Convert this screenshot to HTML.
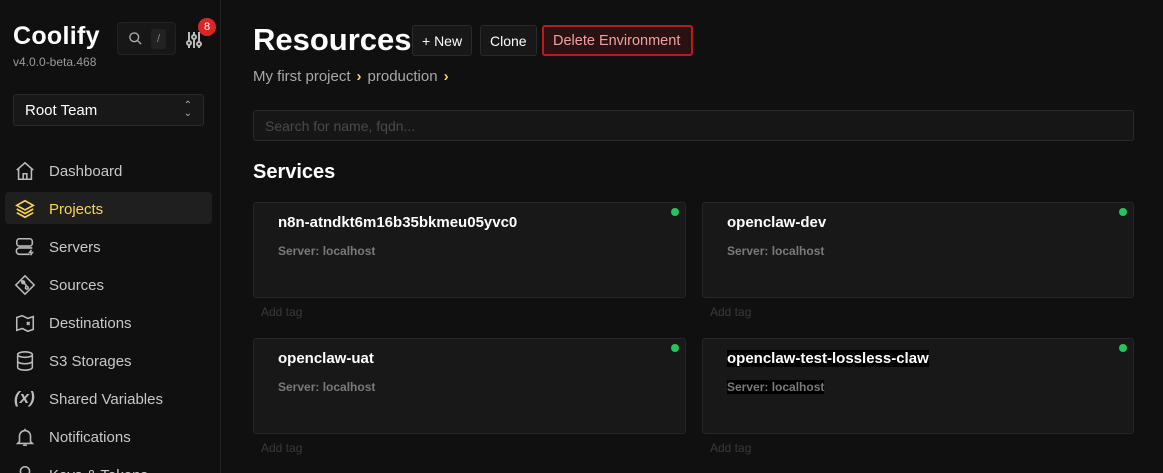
<!DOCTYPE html>
<html><head><meta charset="utf-8"><style>
*{box-sizing:border-box;margin:0;padding:0}
html,body{width:1163px;height:473px;overflow:hidden}
body{background:#101010;font-family:"Liberation Sans",sans-serif;color:#fff;position:relative}
.side{position:absolute;left:0;top:0;width:221px;height:473px;border-right:1px solid #242424;background:#101010}
.logo{position:absolute;left:13px;top:22px;font-size:25px;font-weight:bold;letter-spacing:.3px}
.ver{position:absolute;left:13px;top:55px;font-size:12px;color:#9a9a9a}
.srch{position:absolute;left:117px;top:22px;width:59px;height:33px;background:#171717;border:1px solid #222;border-radius:4px}
.srch .k{position:absolute;left:33px;top:6px;width:15px;height:20px;background:#222;border-radius:3px;color:#888;font-size:11px;text-align:center;line-height:20px}
.badge{position:absolute;left:198px;top:18px;width:18px;height:18px;border-radius:9px;background:#dc2626;font-size:11px;text-align:center;line-height:18px}
.team{position:absolute;left:13px;top:94px;width:191px;height:32px;background:#181818;border:1px solid #2a2a2a;border-radius:3px;font-size:15px;padding:7px 11px}
.nav{position:absolute;left:5px;width:207px;height:32px;font-size:15px;color:#c8c8c8;padding:9px 0 0 44px;border-radius:4px}
.nav svg{position:absolute;left:9px;top:6px}
.act{background:#1f1f1f;color:#fcd452}
h1{position:absolute;left:253px;top:22px;font-size:31px;font-weight:bold}
.btn{position:absolute;top:25px;height:31px;background:#181818;border:1px solid #2a2a2a;border-radius:3px;font-size:14px;padding:7px 9px}
.crumb{position:absolute;left:253px;top:68px;font-size:15px;color:#a8a8a8}
.crumb b{color:#fcd452;margin:0 6px}
.search{position:absolute;left:253px;top:110px;width:881px;height:31px;background:#161616;border:1px solid #2a2a2a;border-radius:3px;font-size:14px;color:#4a4a4a;padding:7px 11px}
h2{position:absolute;left:253px;top:161px;font-size:20px;font-weight:bold}
.card{position:absolute;width:433px;height:96px;background:#181818;border:1px solid #262626;border-radius:3px}
.card .t{position:absolute;left:24px;top:11px;font-size:15px;font-weight:bold}
.card .s{position:absolute;left:24px;top:41px;font-size:12px;font-weight:bold;color:#7a7a7a}
.card .d{position:absolute;right:6px;top:5px;width:8px;height:8px;border-radius:4px;background:#22c55e}
.tag{position:absolute;font-size:12px;color:#3a3a3a}
</style></head><body>
<div class="side">
<div class="logo">Coolify</div><div class="ver">v4.0.0-beta.468</div>
<div class="srch"><svg style="position:absolute;left:10px;top:8px" width="15" height="15" viewBox="0 0 24 24" fill="none" stroke="#aaa" stroke-width="2.2"><circle cx="10" cy="10" r="7"/><path d="M15 15l6 6"/></svg><div class="k">/</div></div>
<svg style="position:absolute;left:186px;top:31px" width="16" height="18" viewBox="0 0 16 18" fill="none" stroke="#bbb" stroke-width="2"><path d="M3 1v16M8 1v16M13 1v16"/><circle cx="3" cy="12" r="2" fill="#101010"/><circle cx="8" cy="6" r="2" fill="#101010"/><circle cx="13" cy="13" r="2" fill="#101010"/></svg>
<div class="badge">8</div>
<div class="team">Root Team<span style="position:absolute;right:11px;top:7px;font-size:10px;color:#aaa;line-height:8px">⌃<br>⌄</span></div>
<div class="nav" style="top:154px"><svg width="22" height="22" viewBox="0 0 24 24" fill="none" stroke="#bbb" stroke-width="1.7"><path d="M3 11l9-8 9 8M5 9v12h14V9M10 21v-6h4v6"/></svg>Dashboard</div>
<div class="nav act" style="top:192px"><svg width="22" height="22" viewBox="0 0 24 24" fill="none" stroke="#fcd452" stroke-width="1.8"><path d="M12 3l9 5-9 5-9-5zM3 12l9 5 9-5M3 16l9 5 9-5"/></svg>Projects</div>
<div class="nav" style="top:230px"><svg width="22" height="22" viewBox="0 0 24 24" fill="none" stroke="#bbb" stroke-width="1.7"><rect x="3" y="3" width="17" height="8" rx="3"/><path d="M17 20H6a3 3 0 010-7h14M7 7h.01M7 16.5h.01M19 15l-2 3h3l-2 3"/></svg>Servers</div>
<div class="nav" style="top:268px"><svg width="22" height="22" viewBox="0 0 24 24" fill="none" stroke="#bbb" stroke-width="1.7"><path d="M12 2l10 10-10 10L2 12z"/><circle cx="10" cy="9" r="1.5"/><circle cx="14" cy="15" r="1.5"/><path d="M8 7l5 5v2"/></svg>Sources</div>
<div class="nav" style="top:306px"><svg width="22" height="22" viewBox="0 0 24 24" fill="none" stroke="#bbb" stroke-width="1.7"><path d="M3 6l6-2 6 3 6-2v14l-6 2-6-3-6 2z"/><path d="M14 11l3 3M17 11l-3 3M8 13h.01M11 13h.01"/></svg>Destinations</div>
<div class="nav" style="top:344px"><svg width="22" height="22" viewBox="0 0 24 24" fill="none" stroke="#bbb" stroke-width="1.7"><ellipse cx="12" cy="5" rx="8" ry="3"/><path d="M4 5v14c0 1.7 3.6 3 8 3s8-1.3 8-3V5M4 12c0 1.7 3.6 3 8 3s8-1.3 8-3"/></svg>S3 Storages</div>
<div class="nav" style="top:382px"><span style="position:absolute;left:9px;top:6px;font-size:17px;font-style:italic;color:#bbb;font-weight:bold">(x)</span>Shared Variables</div>
<div class="nav" style="top:420px"><svg width="22" height="22" viewBox="0 0 24 24" fill="none" stroke="#bbb" stroke-width="1.7"><path d="M6 17V11a6 6 0 0112 0v6l2 2H4zM10 21h4M12 3v2"/></svg>Notifications</div>
<div class="nav" style="top:458px"><svg width="22" height="22" viewBox="0 0 24 24" fill="none" stroke="#bbb" stroke-width="1.7"><circle cx="12" cy="8" r="5"/></svg>Keys &amp; Tokens</div>
</div>
<h1>Resources</h1>
<div class="btn" style="left:412px">+ New</div>
<div class="btn" style="left:480px">Clone</div>
<div class="btn" style="left:542px;width:151px;background:#2a1212;border:2px solid #b91c1c;color:#f0a0a0;padding:6px 9px;font-size:14.5px">Delete Environment</div>
<div class="crumb">My first project<b>›</b>production<b>›</b></div>
<div class="search">Search for name, fqdn...</div>
<h2>Services</h2>
<div class="card" style="left:253px;top:202px"><div class="t">n8n-atndkt6m16b35bkmeu05yvc0</div><div class="s">Server: localhost</div><div class="d"></div></div>
<div class="card" style="left:702px;top:202px;width:432px"><div class="t">openclaw-dev</div><div class="s">Server: localhost</div><div class="d"></div></div>
<div class="card" style="left:253px;top:338px"><div class="t">openclaw-uat</div><div class="s">Server: localhost</div><div class="d"></div></div>
<div class="card" style="left:702px;top:338px;width:432px"><div class="t" style="background:#000">openclaw-test-lossless-claw</div><div class="s" style="background:#000">Server: localhost</div><div class="d"></div></div>
<div class="tag" style="left:261px;top:305px">Add tag</div>
<div class="tag" style="left:710px;top:305px">Add tag</div>
<div class="tag" style="left:261px;top:441px">Add tag</div>
<div class="tag" style="left:710px;top:441px">Add tag</div>
</body></html>
